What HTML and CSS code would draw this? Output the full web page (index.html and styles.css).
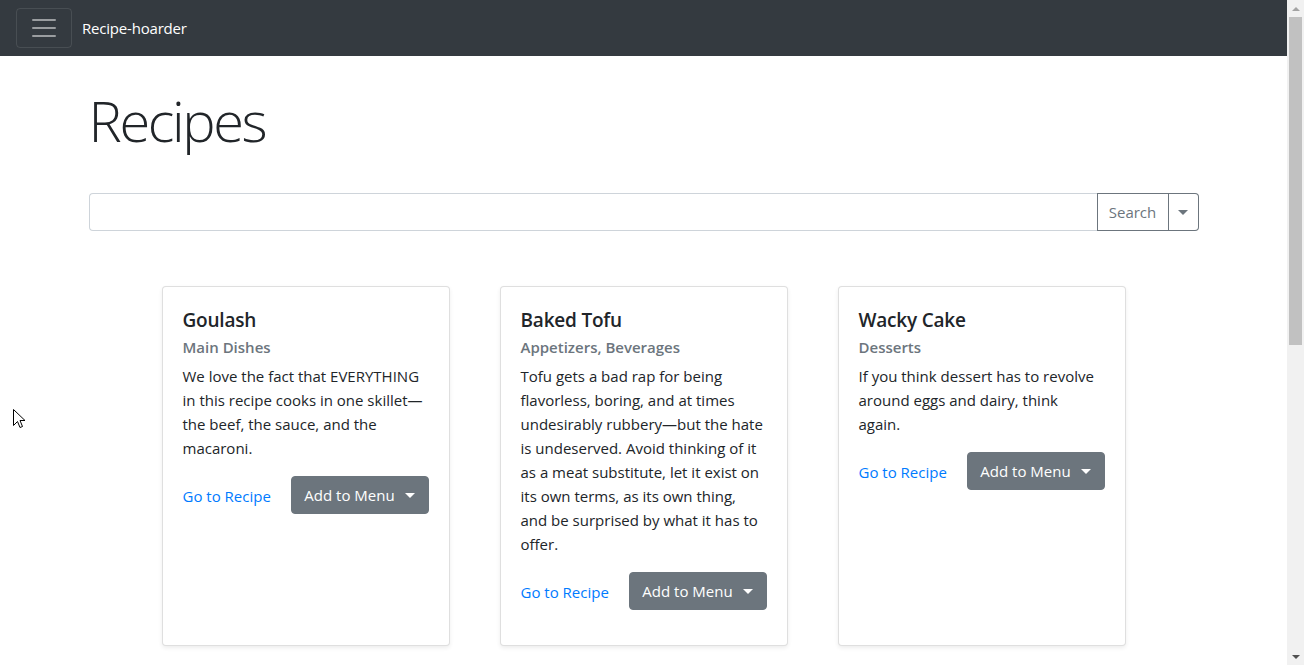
FILE: index.html
```html
<!DOCTYPE html>
<html lang="en">
<head>
<meta charset="utf-8">
<title>Recipe-hoarder</title>
<link rel="stylesheet" href="styles.css">
</head>
<body>
<div class="page">
  <nav class="navbar">
    <button class="toggler" type="button" aria-label="Toggle navigation">
      <svg width="30" height="30" viewBox="0 0 30 30"><path d="M4 7h22M4 15h22M4 23h22" stroke="rgba(255,255,255,0.5)" stroke-width="2" stroke-linecap="round" fill="none"/></svg>
    </button>
    <a class="brand" href="#">Recipe-hoarder</a>
  </nav>
  <main class="container">
    <h1 class="display">Recipes</h1>
    <div class="search">
      <input class="search-input" type="text" aria-label="Search recipes">
      <button class="btn-outline search-btn" type="button">Search</button>
      <button class="btn-outline search-toggle" type="button" aria-label="Options"><span class="caret"></span></button>
    </div>
    <div class="cards">
      <div class="card">
        <h5 class="card-title">Goulash</h5>
        <h6 class="card-subtitle">Main Dishes</h6>
        <p class="card-text">We love the fact that EVERYTHING in this recipe cooks in one skillet—the beef, the sauce, and the macaroni.</p>
        <div class="card-actions">
          <a class="card-link" href="#">Go to Recipe</a>
          <button class="btn-secondary" type="button">Add to Menu<span class="caret"></span></button>
        </div>
      </div>
      <div class="card">
        <h5 class="card-title">Baked Tofu</h5>
        <h6 class="card-subtitle">Appetizers, Beverages</h6>
        <p class="card-text">Tofu gets a bad rap for being flavorless, boring, and at times undesirably rubbery—but the hate is undeserved. Avoid thinking of it as a meat substitute, let it exist on its own terms, as its own thing, and be surprised by what it has to offer.</p>
        <div class="card-actions">
          <a class="card-link" href="#">Go to Recipe</a>
          <button class="btn-secondary" type="button">Add to Menu<span class="caret"></span></button>
        </div>
      </div>
      <div class="card">
        <h5 class="card-title">Wacky Cake</h5>
        <h6 class="card-subtitle">Desserts</h6>
        <p class="card-text">If you think dessert has to revolve around eggs and dairy, think<br>again.</p>
        <div class="card-actions">
          <a class="card-link" href="#">Go to Recipe</a>
          <button class="btn-secondary" type="button">Add to Menu<span class="caret"></span></button>
        </div>
      </div>
    </div>
  </main>
  <svg class="cursor" width="13" height="20" viewBox="0 0 13 20"><path d="M0.5 0.5 L0.5 16.5 L4.5 12.5 L7 18.5 L9.5 17.5 L7 11.5 L12 11.5 Z" fill="#fff" stroke="#000" stroke-width="1"/></svg>
</div>
<div class="scrollbar">
  <div class="sb-arrow sb-up"></div>
  <div class="sb-track"><div class="sb-thumb"></div></div>
  <div class="sb-arrow sb-down"></div>
</div>
</body>
</html>
```
FILE: styles.css
```css
html, body {
  margin: 0;
  padding: 0;
  height: 665px;
  overflow: hidden;
}
body {
  display: flex;
  font-family: "Open Sans", "Noto Sans", "Liberation Sans", sans-serif;
  font-size: 16px;
  line-height: 24px;
  color: #212529;
  background: #fff;
}
.page {
  flex: 1;
  position: relative;
  min-width: 0;
}
.navbar {
  height: 56px;
  box-sizing: border-box;
  padding: 8px 16px;
  background: #343a40;
  display: flex;
  align-items: center;
}
.toggler {
  width: 56px;
  height: 40px;
  box-sizing: border-box;
  padding: 4px 12px;
  background: transparent;
  border: 1px solid rgba(255,255,255,0.1);
  border-radius: 4px;
  display: flex;
  align-items: center;
  justify-content: center;
}
.toggler svg { display: block; }
.brand {
  margin-left: 10px;
  color: #fff;
  text-decoration: none;
  font-size: 15px;
  letter-spacing: -0.2px;
  line-height: 24px;
}
.container {
  width: 1110px;
  margin: 0 auto;
}
.display {
  margin: 31px 0 0;
  font-size: 56px;
  font-weight: 300;
  line-height: 1.2;
  letter-spacing: -2.4px;
  color: #212529;
}
.search {
  margin-top: 39px;
  display: flex;
  height: 38px;
}
.search-input {
  flex: 1;
  min-width: 0;
  box-sizing: border-box;
  height: 38px;
  margin: 0;
  border: 1px solid #ced4da;
  border-right: 0;
  border-radius: 4px 0 0 4px;
  padding: 6px 12px;
  font: inherit;
}
.btn-outline {
  box-sizing: border-box;
  height: 38px;
  margin: 0;
  background: #fff;
  border: 1px solid #6c757d;
  color: #6c757d;
  font-family: inherit;
  font-size: 16px;
  line-height: 24px;
}
.search-btn {
  width: 72px;
  padding: 6px 0;
  border-radius: 0;
  font-size: 15px;
}
.search-toggle {
  width: 30px;
  padding: 0;
  border-left: 0;
  border-radius: 0 4px 4px 0;
  display: flex;
  align-items: center;
  justify-content: center;
}
.caret {
  display: inline-block;
  width: 0;
  height: 0;
  border-top: 5px solid currentColor;
  border-left: 5px solid transparent;
  border-right: 5px solid transparent;
}
.cards {
  margin-top: 55px;
  display: flex;
  justify-content: center;
  gap: 50px;
}
.card {
  width: 288px;
  height: 360px;
  box-sizing: border-box;
  padding: 20px;
  border: 1px solid rgba(0,0,0,0.125);
  border-radius: 4px;
  box-shadow: 0 2px 4px rgba(0,0,0,0.075);
  background: #fff;
}
.card-title {
  margin: 0 0 12px;
  padding-top: 1px;
  font-size: 19px;
  font-weight: 600;
  line-height: 24px;
  letter-spacing: -0.2px;
}
.card-subtitle {
  margin: -6px 0 7px;
  font-size: 15px;
  font-weight: 600;
  line-height: 19px;
  color: #6c757d;
}
.card-text {
  margin: 0 0 16px;
  font-size: 15px;
  line-height: 24px;
}
.card-actions {
  display: flex;
  align-items: center;
  justify-content: space-between;
  white-space: nowrap;
}
.card-link {
  flex-shrink: 0;
  color: #007bff;
  text-decoration: none;
  font-size: 15px;
  line-height: 24px;
  margin-top: 2px;
}
.btn-secondary {
  flex-shrink: 0;
  box-sizing: border-box;
  width: 138px;
  height: 38px;
  padding: 6px 0;
  border: 1px solid #6c757d;
  border-radius: 4px;
  background: #6c757d;
  color: #fff;
  font-family: inherit;
  font-size: 15px;
  line-height: 24px;
  display: inline-flex;
  align-items: center;
  justify-content: center;
  white-space: nowrap;
}
.btn-secondary .caret { margin-left: 10px; }
.cursor {
  position: absolute;
  left: 13px;
  top: 409px;
}
.scrollbar {
  width: 17px;
  height: 665px;
  background: #f1f1f1;
  display: flex;
  flex-direction: column;
}
.sb-arrow {
  height: 17px;
  display: flex;
  align-items: center;
  justify-content: center;
}
.sb-arrow::before {
  content: "";
  width: 0;
  height: 0;
  border-left: 4px solid transparent;
  border-right: 4px solid transparent;
}
.sb-up::before { border-bottom: 4px solid #a3a3a3; }
.sb-down::before { border-top: 4px solid #505050; }
.sb-track {
  flex: 1;
  padding: 0 2px;
}
.sb-thumb {
  height: 328px;
  background: #c1c1c1;
}
```
